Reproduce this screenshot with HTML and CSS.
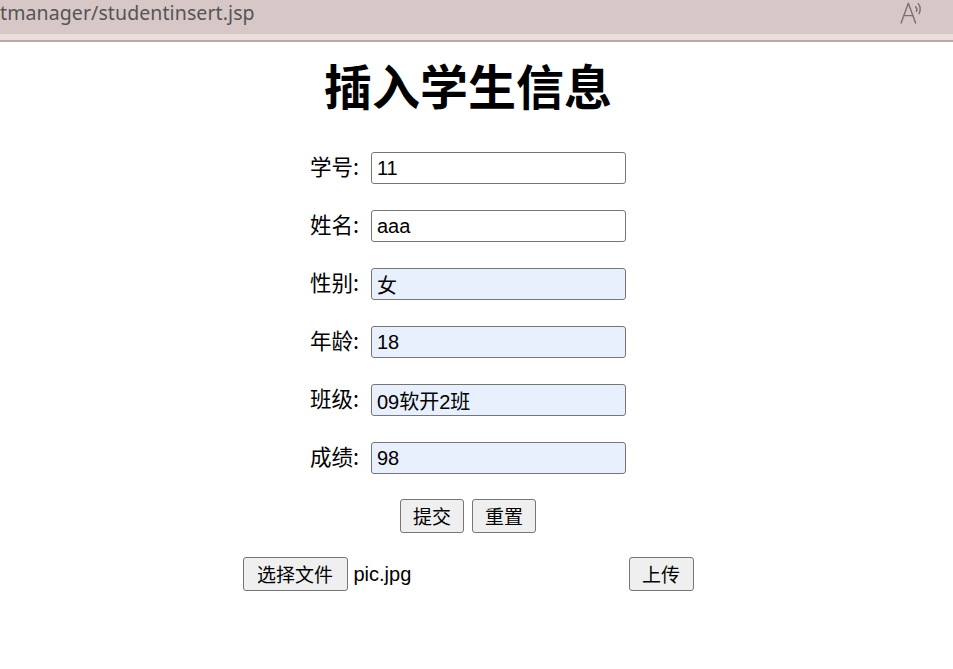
FILE: index.html
```html
<!DOCTYPE html>
<html lang="zh-CN">
<head>
<meta charset="utf-8">
<title>插入学生信息</title>
<link rel="stylesheet" href="styles.css">
</head>
<body>
<header class="topbar">
  <span class="url">tmanager/studentinsert.jsp</span>
  <svg class="read-icon" width="26" height="24" viewBox="0 0 26 24" fill="none" stroke="#7a7272" stroke-width="1.4" stroke-linecap="round" stroke-linejoin="round">
    <path d="M2 22 L9 3 L16 22"/>
    <path d="M4.6 15 H13.4"/>
    <path d="M16 6.5 Q18 8.5 16.8 11"/>
    <path d="M18.5 3.5 Q22 8 19.3 13"/>
  </svg>
</header>
<div class="band"></div>
<main class="page">
  <h1 class="title">插入学生信息</h1>
  <form class="form">
    <div class="row"><label class="label">学号:</label><input class="field" type="text" value="11"></div>
    <div class="row"><label class="label">姓名:</label><input class="field" type="text" value="aaa"></div>
    <div class="row"><label class="label">性别:</label><input class="field filled" type="text" value="女"></div>
    <div class="row"><label class="label">年龄:</label><input class="field filled" type="text" value="18"></div>
    <div class="row"><label class="label">班级:</label><input class="field filled" type="text" value="09软开2班"></div>
    <div class="row"><label class="label">成绩:</label><input class="field filled" type="text" value="98"></div>
    <div class="actions">
      <button class="btn btn-submit" type="button">提交</button>
      <button class="btn btn-reset" type="button">重置</button>
    </div>
  </form>
  <form class="upload">
    <div class="file">
      <span class="btn btn-file">选择文件</span>
      <span class="file-name">pic.jpg</span>
    </div>
    <button class="btn btn-upload" type="button">上传</button>
  </form>
</main>
</body>
</html>
```
FILE: styles.css
```css
* { box-sizing: border-box; }
html, body { margin: 0; padding: 0; background: #fff; }
body {
  width: 953px;
  height: 669px;
  overflow: hidden;
  font-family: "Liberation Sans", "Noto Sans CJK SC", sans-serif;
  color: #000;
}
.topbar {
  height: 34px;
  background: #d7c8c7;
  display: flex;
  align-items: flex-start;
  justify-content: space-between;
  padding: 1px 27px 0 0;
}
.url {
  font-family: "Noto Sans", "Open Sans", sans-serif;
  font-size: 19.5px;
  line-height: 24px;
  color: #555;
  letter-spacing: 0.1px;
}
.read-icon { width: 27px; height: 25px; margin-top: -1px; }
.band {
  height: 8px;
  background: #ecdedd;
  border-bottom: 2px solid #b8aaa9;
}
.page {
  width: 936px;
  display: flex;
  flex-direction: column;
  align-items: center;
}
.title {
  font-family: "Noto Sans CJK SC", sans-serif;
  font-weight: 700;
  font-size: 48px;
  line-height: 56px;
  margin: 14px 0 0 0;
}
.form {
  display: flex;
  flex-direction: column;
  align-items: center;
  gap: 26px;
  margin-top: 40px;
}
.row {
  display: flex;
  align-items: center;
  gap: 12px;
  height: 32px;
  padding-left: 0;
}
.label {
  font-size: 21.5px;
  font-family: "Noto Sans CJK SC", sans-serif;
  line-height: 24px;
  padding-bottom: 4px;
}
.field {
  width: 255px;
  height: 32px;
  border: 1px solid #767676;
  border-radius: 3px;
  background: #fff;
  padding: 0 5px;
  font-family: "Liberation Sans", "Noto Sans CJK SC", sans-serif;
  font-size: 20px;
  color: #000;
}
.field.filled { background: #e8f0fe; }
.actions {
  display: flex;
  gap: 8px;
  margin-top: -1px;
}
.btn {
  display: inline-flex;
  align-items: center;
  justify-content: center;
  height: 34px;
  border: 1px solid #767676;
  border-radius: 3px;
  background: #efefef;
  font-family: "Noto Sans CJK SC", sans-serif;
  font-size: 19px;
  color: #000;
  padding: 0 0 2px 0;
}
.btn-submit, .btn-reset { width: 64px; }
.btn-file { width: 105px; }
.btn-upload { width: 65px; }
.upload {
  display: flex;
  align-items: center;
  gap: 4px;
  margin-top: 24px;
}
.file {
  width: 382px;
  display: flex;
  align-items: center;
  gap: 6px;
}
.file-name {
  font-size: 20px;
  font-family: "Liberation Sans", sans-serif;
}
```
